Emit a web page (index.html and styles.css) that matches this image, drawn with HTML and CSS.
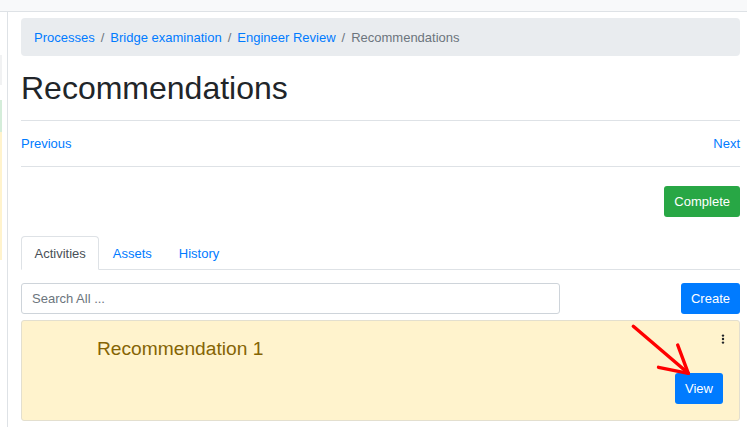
FILE: index.html
```html
<!DOCTYPE html>
<html>
<head>
<meta charset="utf-8">
<link rel="stylesheet" href="styles.css">
</head>
<body>
<div class="topbar"></div>
<div class="layout">
  <aside class="sidebar">
    <div class="stripe stripe-gray"></div>
    <div class="stripe stripe-green"></div>
    <div class="stripe stripe-yellow"></div>
  </aside>
  <main class="main">
    <nav class="breadcrumb">
      <a href="#" class="crumb">Processes</a><span class="sep">/</span><a href="#" class="crumb">Bridge examination</a><span class="sep">/</span><a href="#" class="crumb">Engineer Review</a><span class="sep">/</span><span class="crumb active">Recommendations</span>
    </nav>
    <h1 class="title">Recommendations</h1>
    <div class="pager">
      <a href="#" class="link">Previous</a>
      <a href="#" class="link">Next</a>
    </div>
    <div class="actions">
      <button class="btn btn-green">Complete</button>
    </div>
    <ul class="tabs">
      <li><a href="#" class="tab active">Activities</a></li>
      <li><a href="#" class="tab">Assets</a></li>
      <li><a href="#" class="tab">History</a></li>
    </ul>
    <div class="search-row">
      <input class="search" type="text" placeholder="Search All ...">
      <button class="btn btn-blue create">Create</button>
    </div>
    <div class="card">
      <div class="card-title">Recommendation 1</div>
      <div class="card-side">
        <svg class="kebab" width="4" height="11" viewBox="0 0 4 11"><circle cx="2" cy="1.6" r="1.2" fill="#212529"/><circle cx="2" cy="5" r="1.2" fill="#212529"/><circle cx="2" cy="8.6" r="1.2" fill="#212529"/></svg>
        <button class="btn btn-blue">View</button>
      </div>
      <svg class="arrow" width="720" height="100" viewBox="0 0 720 100">
        <g stroke="#ff0000" stroke-width="3.4" stroke-linecap="round" fill="none">
          <line x1="611.3" y1="5.3" x2="666.3" y2="52.3"/>
          <line x1="636.5" y1="46.3" x2="666.3" y2="52.3"/>
          <line x1="655.7" y1="24" x2="666.3" y2="52.3"/>
        </g>
      </svg>
    </div>
  </main>
</div>
</body>
</html>
```
FILE: styles.css
```css
* { box-sizing: border-box; }
body {
  margin: 0;
  font-family: "Liberation Sans", Arial, sans-serif;
  font-size: 13px;
  color: #212529;
  background: #fff;
}
a { text-decoration: none; color: #007bff; }

.topbar {
  height: 12px;
  background: #f8f9fa;
  border-bottom: 1px solid #dee2e6;
}
.layout {
  display: flex;
  align-items: stretch;
}
.sidebar {
  width: 8px;
  border-right: 1px solid #dee2e6;
  display: flex;
  flex-direction: column;
}
.stripe { width: 2px; }
.stripe-gray { margin-top: 43px; height: 30px; background: #f1f2f3; }
.stripe-green { margin-top: 15px; height: 32px; background: #d4edda; }
.stripe-yellow { height: 128px; background: #fff3cd; }

.main {
  flex: 1;
  padding: 6px 7px 6px 13px;
}
.breadcrumb {
  background: #e9ecef;
  border-radius: 4px;
  padding: 10px 13px 9px;
  line-height: 19px;
  height: 38px;
}
.sep { color: #6c757d; padding: 0 6px; }
.crumb.active { color: #6c757d; }

.title {
  font-size: 32px;
  font-weight: 400;
  line-height: 38px;
  margin: 13px 0 0;
  padding-bottom: 13px;
  border-bottom: 1px solid #dee2e6;
}
.pager {
  display: flex;
  justify-content: space-between;
  line-height: 20px;
  padding: 13px 0 12px;
  border-bottom: 1px solid #dee2e6;
}
.actions {
  display: flex;
  justify-content: flex-end;
  padding-top: 19px;
}
.btn {
  font-family: inherit;
  font-size: 13px;
  line-height: 19px;
  padding: 6px 10px;
  border: 0;
  border-radius: 3px;
  color: #fff;
}
.btn-green { background: #28a745; }
.btn-blue { background: #007bff; }

.tabs {
  list-style: none;
  margin: 19px 0 0;
  padding: 0;
  display: flex;
  border-bottom: 1px solid #dee2e6;
}
.tab {
  display: block;
  padding: 8px 12.5px 6px;
  line-height: 18px;
  border: 1px solid transparent;
  border-radius: 4px 4px 0 0;
  margin-bottom: -1px;
}
.tab.active {
  color: #495057;
  border-color: #dee2e6 #dee2e6 #fff;
  background: #fff;
}

.search-row {
  display: grid;
  grid-template-columns: 75% 25%;
  margin-top: 13px;
}
.search {
  height: 31px;
  border: 1px solid #ced4da;
  border-radius: 3px;
  padding: 0 10px;
  font-family: inherit;
  font-size: 13px;
  color: #495057;
}
.search::placeholder { color: #6c757d; }
.create { justify-self: end; }

.card {
  position: relative;
  margin-top: 6px;
  height: 101px;
  background: #fff3cd;
  border: 1px solid #e3dfcf;
  border-radius: 3px;
  display: flex;
  justify-content: space-between;
  padding: 13px 16px 16px 16px;
}
.card-title {
  font-size: 19.2px;
  line-height: 22px;
  color: #856404;
  margin: 4px 0 0 59px;
}
.card-side {
  display: flex;
  flex-direction: column;
  align-items: flex-end;
  justify-content: space-between;
}
.kebab { display: block; margin-right: -2px; }
.arrow {
  position: absolute;
  left: 0;
  top: 0;
  overflow: visible;
  pointer-events: none;
}
```
